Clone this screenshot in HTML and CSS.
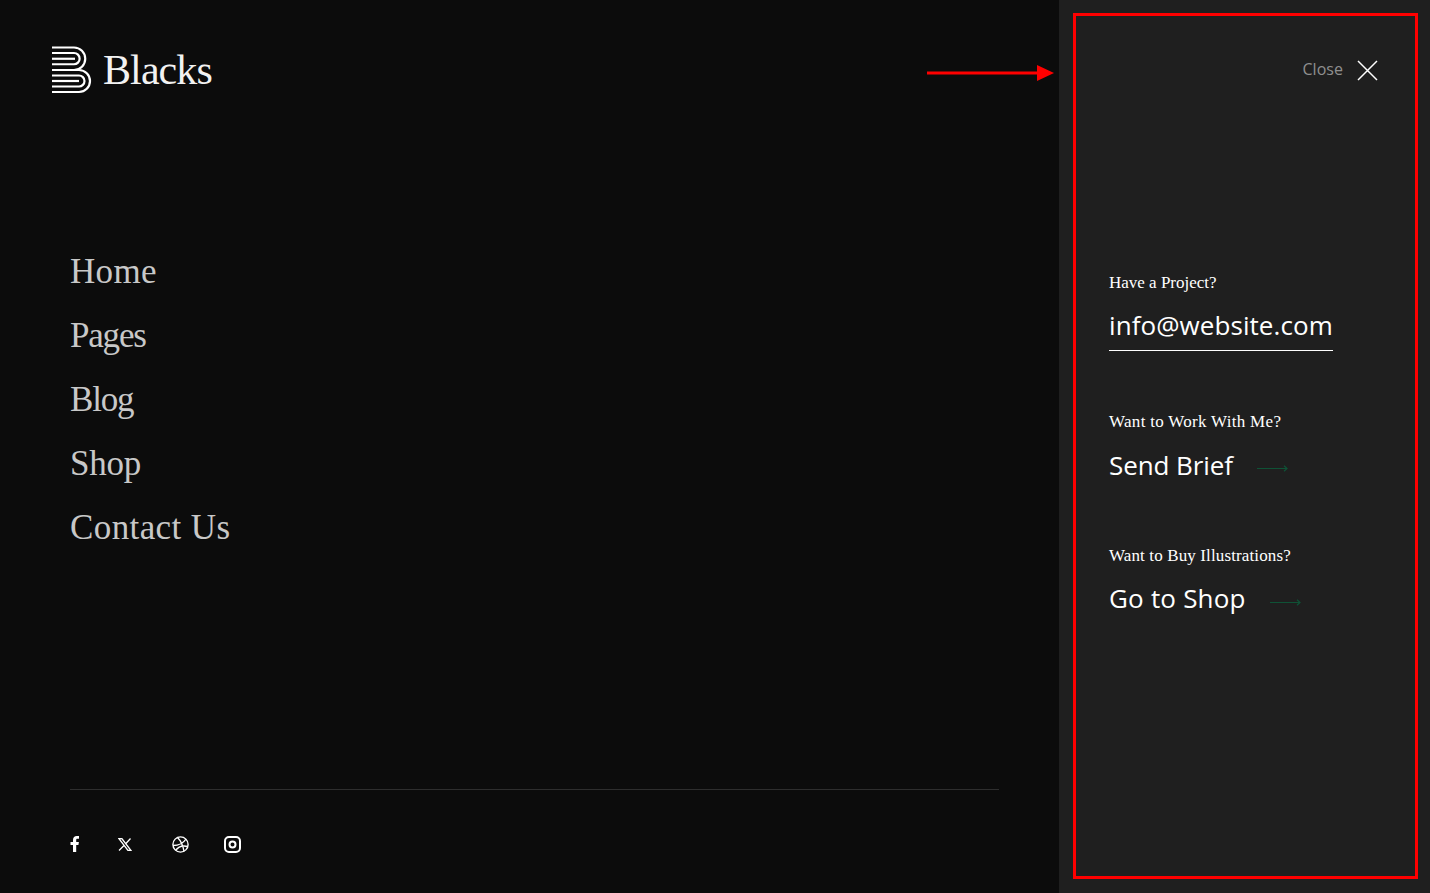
FILE: index.html
```html
<!DOCTYPE html>
<html lang="en">
<head>
<meta charset="utf-8">
<title>Blacks</title>
<link rel="stylesheet" href="styles.css">
</head>
<body>
<div class="page">
  <main class="main">
    <header class="brand">
      <svg class="logo" width="40" height="48" viewBox="0 0 40 48" fill="none" stroke="#fff" stroke-width="2.2">
        <path d="M0 1.500H22A11.250 11.250 0 0 1 22 24H0"/>
        <path d="M0 7H22A5.600 5.600 0 0 1 22 18.250H0"/>
        <path d="M0 12.750H23"/>
        <path d="M22 24H27A11 11 0 0 1 27 46H0"/>
        <path d="M0 29.500H27A5.500 5.500 0 0 1 27 40.500H0"/>
        <path d="M0 35H27"/>
      </svg>
      <span class="brand-name">Blacks</span>
    </header>
    <nav class="nav">
      <a class="n-home">Home</a>
      <a class="n-pages">Pages</a>
      <a class="n-blog">Blog</a>
      <a class="n-shop">Shop</a>
      <a class="n-contact">Contact Us</a>
    </nav>
    <footer class="foot">
      <div class="socials">
        <svg class="ic-f" width="10" height="16" viewBox="0 0 10 16" fill="#fff"><path d="M3 16V9H.5V6H3V4C3 1.500 4.500 0 6.800 0H9V2.800H7.500C6.500 2.800 6.200 3.300 6.200 4.200V6H8.900L8.400 9H6.200V16Z"/></svg>
        <svg class="ic-x" width="14" height="13" viewBox="0 0 14 13" fill="none" stroke="#fff" stroke-width="1.300"><path d="M.8.500H3.800L13 12.500H10Z"/><path d="M12.500.500 7.700 5.800M6 7.500 1 12.500"/></svg>
        <svg class="ic-d" width="17" height="17" viewBox="0 0 17 17" fill="none" stroke="#fff" stroke-width="1.400"><circle cx="8.500" cy="8.500" r="7.600"/><path d="M5.500 1.500C8.500 4.500 11 9 12 15.500M1 9.500C6 9.500 11.500 7 14 3M3.500 14.500C6 11 10.500 9 16 10.500"/></svg>
        <svg class="ic-i" width="17" height="17" viewBox="0 0 17 17" fill="none" stroke="#fff" stroke-width="2"><rect x="1" y="1" width="15" height="15" rx="4"/><circle cx="8.500" cy="8.500" r="3"/></svg>
      </div>
    </footer>
  </main>
  <aside class="panel">
    <div class="close">
      <span class="close-label">Close</span>
      <svg width="21" height="21" viewBox="0 0 21 21" stroke="#fff" stroke-width="1.500"><path d="M1 1 20 20M20 1 1 20"/></svg>
    </div>
    <div class="info">
      <section class="block block-mail">
        <p class="q q-first">Have a Project?</p>
        <a class="mail">info@website.com</a>
      </section>
      <section class="block">
        <p class="q q-work">Want to Work With Me?</p>
        <a class="link link-send">Send Brief
          <svg class="arr" width="31" height="7" viewBox="0 0 31 7" fill="none" stroke="#0f5236" stroke-width="1.200"><path d="M0 3.500H30M27 .8 30 3.500 27 6.200"/></svg>
        </a>
      </section>
      <section class="block">
        <p class="q q-buy">Want to Buy Illustrations?</p>
        <a class="link link-shop">Go to Shop
          <svg class="arr" width="31" height="7" viewBox="0 0 31 7" fill="none" stroke="#0f5236" stroke-width="1.200"><path d="M0 3.500H30M27 .8 30 3.500 27 6.200"/></svg>
        </a>
      </section>
    </div>
  </aside>
</div>
<div class="mark-arrow"><svg width="128" height="18" viewBox="0 0 128 18" fill="#f00"><path d="M0 7.500H110V1L127 9 110 17V10.500H0Z"/></svg></div>
<div class="mark-frame"></div>
</body>
</html>
```
FILE: styles.css
```css
* { box-sizing: border-box; }
html, body { margin: 0; height: 100%; }
body { background: #0c0c0c; overflow: hidden; }
.page { display: flex; height: 893px; }
.main { width: 1059px; display: flex; flex-direction: column; padding: 46px 60px 0 52px; }
.brand { display: flex; align-items: center; gap: 11px; height: 48px; }
.brand-name { font: 42px/50px "Liberation Serif", serif; color: #f2f2f2; letter-spacing: -0.9px; }
.nav { display: flex; flex-direction: column; margin: 146px 0 0 18px; }
.nav a { font: 35px/64px "Liberation Serif", serif; color: #c8c8c8; height: 64px; letter-spacing: -0.2px; }
.nav .n-home { letter-spacing: 0.3px; }
.nav .n-pages { letter-spacing: -1.2px; }
.nav .n-blog { letter-spacing: -1.2px; }
.nav .n-contact { letter-spacing: 0.4px; }
.foot { margin: 229px 0 0 18px; border-top: 1px solid #2e2e2e; padding-top: 45px; }
.socials { display: flex; align-items: center; height: 18px; }
.ic-f { margin-right: 38px; }
.ic-x { margin-right: 40px; }
.ic-d { margin-right: 35px; }
.panel { width: 371px; background: #1f1f1f; padding: 0 50px; display: flex; flex-direction: column; }
.close { display: flex; align-items: center; justify-content: flex-end; gap: 14px; margin: 59px 2px 0 0; height: 22px; }
.close-label { font: 16px/20px "Open Sans", sans-serif; color: #8f8f8f; margin-bottom: 2px; letter-spacing: 0.03px; }
.info { margin-top: 191px; display: flex; flex-direction: column; }
.block { margin-bottom: 61px; }
.block-mail { margin-bottom: 60px; }
.q { margin: 0; font: 17px/22px "Liberation Serif", serif; color: #fff; }
.q-work { letter-spacing: 0.3px; }
.q-buy { letter-spacing: 0.13px; }
.mail { display: inline-block; margin-top: 12px; padding-bottom: 6px; border-bottom: 1px solid #fff; font: 26px/38px "Open Sans", sans-serif; color: #fff; letter-spacing: 0.07px; }
.link { display: flex; align-items: center; gap: 24px; font: 26px/38px "Open Sans", sans-serif; color: #fff; }
.link-send { margin-top: 13px; letter-spacing: -0.1px; }
.link-send .arr { margin-top: 7px; }
.link-shop { margin-top: 12px; letter-spacing: 0.2px; }
.link-shop .arr { margin-top: 9px; }
.mark-arrow { position: absolute; left: 927px; top: 64px; line-height: 0; }
.mark-frame { position: absolute; left: 1073px; top: 13px; width: 345px; height: 866px; border: 3px solid #f00; }
```
